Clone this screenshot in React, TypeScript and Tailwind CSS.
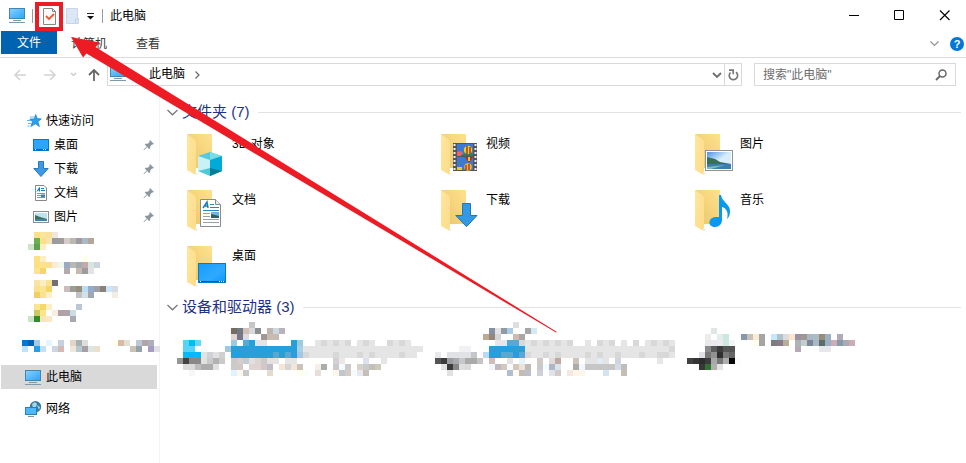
import React from "react";

type Run = [number, number, string];

/* Pixelated blocks: each run is [column, row, colours]; "-" skips a cell. */
function Mosaic({ w, h, runs, className }: { w: number; h: number; runs: Run[]; className?: string }) {
  return (
    <svg width={w} height={h} viewBox={`0 0 ${w} ${h}`} shapeRendering="crispEdges" className={`block shrink-0 ${className ?? ""}`}>
      {runs.flatMap(([c, r, s]) =>
        s.split(" ").map((k, i) =>
          k === "-" ? null : <rect key={`${c}-${r}-${i}`} x={(c + i) * 6} y={r * 6} width={6} height={6} fill={`#${k}`} />
        )
      )}
    </svg>
  );
}

const recent: Run[] = [
  [2, 0, "fbe08a fae59b f8e19b f1e6dc"],
  [2, 1, "69b04f fde088 f7e4b0 9a9ba1 a39b9b d5ccc9 b8b9b1 a09ba3 aab8c3 b3a79a"],
  [1, 2, "cfe3c8 5ea14e fcefc2"],
  [2, 4, "fbe084 fcefc3"],
  [10, 4, "fffee8"],
  [2, 5, "fbe084 fde38c fbe08f fdebd3 f0f8ee 98aac8 b8b9b1 a6abad c5a8ae d7e5df ccd4de"],
  [2, 6, "fce48f f5d56a - - - b3aaab - c6bab0 9c9c9e e3e3e3"],
  [2, 8, "f8e4a6 f8efc4 fae394 736f75"],
  [2, 9, "fbe18b fce592 f5d563 - fffef7 cbbcbe 9a9e97 979080 bcdcf4 94abca a09fa5 8b8177 c9e5ff d7dce0"],
  [2, 10, "efd063 fbe08d fcf0c6 fffef8 - - - c1c3c8 d4e2e5 9fa7b3 - - - f3ede6"],
  [2, 12, "fbe68f f5d86c fcefc6 - - - - bcc6d4"],
  [2, 13, "c9cb62 fde38c - f9eedb b0a1a6 ada3a9 cadde3"],
  [1, 14, "cbe3c6 358c22 f8e6b8 f8e9c4 - - - aaa8b0"],
  [0, 18, "0078d7 0063b5 a7c9e5 - e5f5ff - c5d1df - e1d5c8 a5b0b2 dddddd - - - - fffff2 d8b9a3 e0e0d3 - bcc6d4 b0a6aa aab1ba"],
  [0, 19, "c2e0f8 - 249fea c2e0f8 - ccd5e3 d7b9b3 - f1e6dc b5c9d1 a69fa5 dce6e2 eedecd - - - - - cdc2b6 96a2aa - a69bc0 e1e1e4"],
];

const driveOne: Run[] = [
  [12, 0, "c7c7c7"],
  [9, 1, "766c61 6f7b82 d5c0b8 d8d9dc 8a8f8f - bdb3af cbd8e2 b9b2b9"],
  [9, 2, "dfd6d5 7a7589 dcdce2 - - a09896 c7bcaf c7bcaf"],
  [1, 3, "57d3f8 00bcf2 67d5f7 - - - - - 9fc9df - 5ba9d2 269fdb e5e3e6 e5e3e6 - - - - 269fdb 9fc9df"],
  [23, 3, "e5e5e5 d8d8d8 e5e5e5 d8d8d8 e5e5e5 d8d8d8 - e5e5e5 d8d8d8 e5e5e5 - - d8d8d8 e5e5e5 d8d8d8 e5e5e5"],
  [1, 4, "57d3f8 57d3f8 - fafafa - - - 9fc9df 269fdb 269fdb 269fdb 269fdb 269fdb 269fdb 269fdb 269fdb 269fdb 269fdb 269fdb a7cfe5 e5e5e5 e5e5e5 e5e5e5 e5e5e5 e5e5e5 e5e5e5 e5e5e5 e5e5e5 e5e5e5 e5e5e5 e5e5e5 e5e5e5 e5e5e5 e5e5e5 e5e5e5 e5e5e5 e5e5e5 e5e5e5 e5e5e5 e5e5e5"],
  [1, 5, "00bcf2 00bcf2 00bcf2 e1e2e6 d0d1d4 e1e1e1 d0d0d0 - 269fdb 269fdb 269fdb 269fdb 269fdb 269fdb 269fdb 55a9d3 269fdb 55a9d3 269fdb 9fc9df d8d8d8 e5e5e5 e5e5e5 e5e5e5 e5e5e5 d8d8d8 e5e5e5 e5e5e5 e5e5e5 d8d8d8 e5e5e5 d8d8d8 e5e5e5 e5e5e5 e5e5e5 e5e5e5 d8d8d8 e5e5e5 e5e5e5"],
  [0, 6, "969696 434343 888888 898989 e1e1e1 cacaca b2b2b2 cacaca - cacaca d4cecd c4cbd4 e0e0e0 e0d4d2 cacaca e6e1df e3e3e3 - e5e5e5 e5e5e5 - - - - - - cfd1d7 eee5e5 - - - dce1ed - - e5e5e5"],
  [1, 7, "dadada dadada bdbdbd acacac acacac e1e1e1 - - cacaca d5c7c5 - e0d4d2 e0d4d2 d5c7c5 bdbec7 - f6e5d5 d5d5d5 f6e5d5 c9c4b8 - - f4efeb acacac - cacaca f4fcff cacaca - d8d1c9 cacaca c3bfba cdcab9"],
  [2, 8, "f7f7f7 - - - - - - dff3ff fff7ec c8c8c8 - - - e2dccc - - - - fffdeb f7fff8 - e7dfd7 - - fff6e9 bfc6d0 d4cbc4 f4fcff e7e8f1 c6bfb7"],
];

const driveTwo: Run[] = [
  [13, 0, "dedede"],
  [9, 1, "8590a3 e3e3e3 9199a3 aacae6 - - a6a6a6 d5e9f5"],
  [8, 2, "bfaa8f 94877a d5d5d3 - - ccbcaf a7a7a7"],
  [10, 3, "e7e7e9 e7e7e9 55a9d3 55a9d3 d8d8d8 e5e5e5 d8d8d8 e5e5e5 d8d8d8 e5e5e5 d8d8d8 e5e5e5 d8d8d8 - - e5e5e5 - d8d8d8 e5e5e5 d8d8d8 - e5e5e5 - d8d8d8 - e5e5e5 d8d8d8 e5e5e5 d8d8d8 e5e5e5"],
  [4, 4, "f0f1f3 f0f1f3 - - - 269fdb 269fdb 269fdb 269fdb 269fdb 269fdb e5e5e5 e5e5e5 e5e5e5 e5e5e5 e5e5e5 e5e5e5 e5e5e5 e5e5e5 e5e5e5 e5e5e5 e5e5e5 e5e5e5 e5e5e5 e5e5e5 e5e5e5 e5e5e5 e5e5e5 e5e5e5 e5e5e5 e5e5e5 e5e5e5 e5e5e5 e5e5e5 e5e5e5 d8d8d8"],
  [0, 5, "e7e9eb - e1e2e6 e1e2e6 e1e2e6 e1e2e6 c4c6c9 - b4ddf2 269fdb 269fdb 55a9d3 55a9d3 269fdb 55a9d3 d8d8d8 e5e5e5 e5e5e5 d8d8d8 e5e5e5 d8d8d8 e5e5e5 e5e5e5 e5e5e5 e5e5e5 d8d8d8 e5e5e5 d8d8d8 e5e5e5 e5e5e5 d8d8d8 e5e5e5 e5e5e5 e5e5e5 d8d8d8 e5e5e5 e5e5e5 d8d8d8 d8d8d8 e5e5e5"],
  [0, 6, "545454 3b3b3b 999d9e a8abad c5c8ca aaaaaa aaaaaa c5c5c5 - d0bdb9 - - e4e2e2 - e4f4fb - - d1c9c6 - dedbd8 bfa9a6 - - cec3b9 - e4e4e4 e4e4e4 dfedf3 e4e4e4 - d0d4e1 - - - - - - e7e7e7"],
  [1, 7, "e1e1e1 3b3b3b 878787 dedede dadada - - - f1f7ff c0b9be d3c7be f4fcff d3c7be ebe3db bfbab4 - cacaca f4fcff b1b6c4 d9e5ea - - abaaa8 f1f7ff c6c6c6 c6c6c6 c6c6c6 c6c6c6 c6c6c6 d6dce6 bebebe"],
  [2, 8, "e1e1e1 - - - - - - - - - aec0d0 fff9f0 c3bcb6 b9c0cc - ced0d7 - e0e3eb d4cbc8 - f3e8df fff6e9 fff6e9 - - - d5e2ef - - c6bdb5"],
];

const driveThree: Run[] = [
  [4, 0, "e1e5e6 - fefefe"],
  [3, 1, "ececec ffffff e4ecec cce7df - - 8798ad c7c1b8 faebd4 a6a3a9 - c7e7ff afc3c9 dcdcdc ffe4c9 9892aa a09791 a9b8c5 aebac6 958f7a 9bb0c5 - b1aab8"],
  [3, 2, "e8e8e8 f0e6f1 e9ebef cfe9e2 f2f4f5 - - - fffff0 a8a3a3 - 7d7d7d 887b8e b8ad96 - adb5b4 c2ced0 7b8797 a9b8c5 5d6b69 9bb0c5 cfabb3 8798ad a9abb3 cfabb3"],
  [3, 3, "8a8a8d 5c5c5d 3e3e3e 575757 545454 - - - - - - - - - - b5aab8 - - - e6e8ec e6e8ec"],
  [2, 4, "e1e2e8 777777 929292 303030 7a7a7a 676767"],
  [0, 5, "424242 353535 2d2d2d 3b3b3b a8a8a8 777777 adadad 080808 fcfcfc"],
  [2, 6, "383838 327132 afafaf e1e3e3"],
];

function Computer({ className = "" }: { className?: string }) {
  return (
    <svg width="17" height="16" viewBox="0 0 17 16" className={`shrink-0 ${className}`}>
      <defs><linearGradient id="screen" x2="1" y2="1"><stop stopColor="#8fd0fc" /><stop offset=".5" stopColor="#57bbff" /><stop offset="1" stopColor="#27a5fb" /></linearGradient></defs>
      <rect x=".5" y=".5" width="15" height="10" fill="url(#screen)" stroke="#4286ad" />
      <path d="M4 12.5h8M0 14.5h16" stroke="#7b9bad" />
    </svg>
  );
}

function DesktopIcon() {
  return <svg width="16" height="14" viewBox="0 0 16 14" className="shrink-0"><rect x=".5" y="1.5" width="15" height="11" fill="#29a6ff" stroke="#0879c6" /><path d="M1 11.5h14" stroke="#075f9d" /><path d="M2 11.5h1M10 11.5h4" stroke="#fff" strokeDasharray="1 1" /></svg>;
}
function DownloadIcon() {
  return <svg width="16" height="16" viewBox="0 0 16 16" className="shrink-0"><path d="M5.5.5h5v7h4.7L8 15.5.8 7.5h4.7z" fill="#3d98e6" stroke="#267ac2" /></svg>;
}
function DocumentIcon() {
  return <svg width="16" height="16" viewBox="0 0 16 16" className="shrink-0"><path d="M2.5.5h8.500l2.500 2.500v12.500h-11z" fill="#fff" stroke="#888" /><path d="M4 6.5 6.5 2.500v4M5 5h2M8 3.5h3M8 5.5h4" stroke="#1479b9" fill="none" /><path d="M4 8.5h8M4 10.5h4M4 12.5h8" stroke="#83939d" /><path d="M8 9.500h4V12H8z" fill="#3486ad" /></svg>;
}
function PictureIcon() {
  return <svg width="16" height="12" viewBox="0 0 16 12" className="shrink-0"><rect x=".5" y=".5" width="15" height="11" fill="#fff" stroke="#8e8e8e" /><path d="M2 2h12v8H2z" fill="#b8e4f4" /><path d="m2 4 5 2 7 2v1H2z" fill="#39715a" /><path d="M2 8h12v2H2z" fill="#3585af" /></svg>;
}
function StarIcon() {
  return <svg width="15" height="14" viewBox="0 0 15 14" className="shrink-0"><path d="m8.7.5 1.4 4.1 4.2.3-3.4 2.6 1.5 5-4-2.7-4.6 2.7 1.7-4.7L2.8 5h4.4z" fill="#28a1ee" stroke="#137dc7" strokeWidth=".7" /><path d="M3 3h4M0 6.5h4M1 9.5h3M.5 12h2" stroke="#61b9ef" /></svg>;
}
function Pin() {
  return <svg width="12" height="12" viewBox="0 0 12 12" className="shrink-0"><path d="m7 1 4 4-1.2.6-.8-.2-1.8 2L7 9.5l-1 .5-1.8-2L1 11.3l-.5-.5L3.7 7.4 1.8 5.6l.6-.8 2.3-.1 1.9-1.8-.2-1z" fill="#8a979f" /></svg>;
}

function FolderIcon({ kind }: { kind: string }) {
  return (
    <svg width="40" height="44" viewBox="0 0 40 44" className="block shrink-0">
      <defs>
        <linearGradient id="folder-back" x1="1" x2="0" y2="1"><stop stopColor="#ffe18d" /><stop offset="1" stopColor="#e9c568" /></linearGradient>
        <linearGradient id="folder-front" y2="1"><stop stopColor="#ffe6a0" /><stop offset="1" stopColor="#fbdc87" /></linearGradient>
        <linearGradient id="blue" x2="1" y2="1"><stop stopColor="#139cff" /><stop offset=".6" stopColor="#30a9ff" /><stop offset="1" stopColor="#069afd" /></linearGradient>
        <linearGradient id="sky" y2="1"><stop stopColor="#4d91e8" /><stop offset=".5" stopColor="#d7edf9" /></linearGradient>
      </defs>
      <path d="M8 39h3l-1 1.500H8z" fill="#e8e8e8" />
      <path d="M0 0h25v34H8L0 3z" fill="url(#folder-back)" />
      <path d="M0 0l8 6 1 3v28l-1 3.500L0 36z" fill="url(#folder-front)" />
      {kind === "3D 对象" && <g><path d="m11 22 12-4 12 4-12 5z" fill="#55c9df" /><path d="m23 18 12 4-12 5z" fill="#7bdce6" /><path d="m11 22 12 4v15l-12-4z" fill="#c9f2f6" /><path d="m23 26 12-4v15l-12 5z" fill="#00aad7" /><path d="M23 34l12 3-12 5z" fill="#087c93" /><path d="m11 37 12-3v8z" fill="#4bcbd8" /></g>}
      {kind === "文档" && <g><path d="M13.5 9.5h15l5 5v22h-20z" fill="#fff" stroke="#858d92" /><path d="M28.5 9.5v5h5" fill="#e7ebed" stroke="#858d92" /><path d="m16 18 4-6 1 6M18 16h3" stroke="#177ebd" strokeWidth="1.5" fill="none" /><path d="M23 14.5h4M23 17.5h9M16 20.5h16" stroke="#2889bf" /><path d="M16 23.5h7M16 26.5h7M16 29.5h16M16 32.5h16" stroke="#98a0a5" /><path d="M24 22h8v6h-8z" fill="#75b2dc" /><path d="m24 24 8 2v2h-8z" fill="#315c69" /></g>}
      {kind === "桌面" && <g><rect x="11.5" y="17.5" width="27" height="19" fill="url(#blue)" stroke="#087abf" /><path d="M12 35.5h26" stroke="#085b96" /><path d="M13 35.5h2M32 35.5h5" stroke="#fff" strokeDasharray="1 1" /></g>}
      {kind === "视频" && <g><path d="M12 9h24v28H12z" fill="#555" /><path d="M13.5 10v27M34.5 10v27" stroke="#f2f2f2" strokeWidth="2" strokeDasharray="2 2" /><path d="M16 10h16v12H16zM16 23h16v13H16z" fill="#3c78d4" /><path d="m16 18 4-1 4 5h-8z" fill="#ec6269" /><path d="m20 21 5-2 7 1v2H20z" fill="#1c8364" /><circle cx="27" cy="16" r="4.2" fill="#f1cb20" /><path d="M26 12v9M29 13v7" stroke="#a83b23" strokeWidth="1.5" /><path d="M24 23h8l-4 6z" fill="#b62b30" /><path d="M27 23h2v4h-2z" fill="#edc71f" /><circle cx="27" cy="33" r="3.8" fill="#e9bc24" /><path d="M25 31v5M28 30v6" stroke="#ba392d" strokeWidth="1.5" /><path d="M16 33h5v3h-5z" fill="#e5cf24" /></g>}
      {kind === "下载" && <path d="M21.5 13.5h8v12h6.500L25.500 36.700 14.800 25.5h6.7z" fill="#3399e5" stroke="#2178b8" />}
      {kind === "图片" && <g><rect x="10.5" y="16.5" width="27" height="20" fill="#fff" stroke="#929292" /><path d="M12 18h24v17H12z" fill="url(#sky)" /><path d="m12 23 8 2 5 3 11 2v2H12z" fill="#38705c" /><path d="M12 30h24v5H12z" fill="#3a7fab" /><path d="m12 33 18-2-14 4h-4z" fill="#80bac4" /></g>}
      {kind === "音乐" && <path d="M24 5h2c1 7 9 9 9 16 0 4-1 6-3 8 2-7-1-11-5-12v13c0 4-3 7-7 7-8 0-7-10 1-10h3z" fill="#079aef" />}
    </svg>
  );
}

function GroupHeading({ text }: { text: string }) {
  return (
    <div className="flex h-5 items-center text-[15px] leading-5 text-[#1e3287]">
      <svg width="11" height="7" viewBox="0 0 11 7" className="mr-1 shrink-0"><path d="m.5 1 5 4.8 5-4.8" fill="none" stroke="#777" strokeWidth="1.2" /></svg>
      <span className="whitespace-nowrap">{text}</span>
      <span className="ml-2 h-px flex-1 bg-[#e2e2e2]" />
    </div>
  );
}

const quick = [
  { name: "桌面", icon: <DesktopIcon /> },
  { name: "下载", icon: <DownloadIcon /> },
  { name: "文档", icon: <DocumentIcon /> },
  { name: "图片", icon: <PictureIcon /> },
];
const folders = ["3D 对象", "视频", "图片", "文档", "下载", "音乐", "桌面"];

export default function App() {
  return (
    <div className="relative flex h-[463px] w-[966px] flex-col overflow-hidden bg-white font-['Liberation_Sans','Noto_Sans_CJK_SC',sans-serif] text-xs text-black">
      <header className="flex h-[31px] shrink-0 items-center pl-[9px]">
        <Computer />
        <span className="ml-[6px] h-3.5 w-px bg-[#999]" />
        <span className="mt-px ml-[2px] flex h-[29px] w-7 items-center justify-center border-4 border-[#ed1c24] pl-px">
          <svg width="13" height="17" viewBox="0 0 13 17" className="shrink-0"><path d="M.5.5h9l3 3v13H.5z" fill="#fafafa" stroke="#858585" /><path d="M9.5.5v3h3" fill="none" stroke="#858585" /><path d="m3 8 3 3 5-5" fill="none" stroke="#ef572c" strokeWidth="1.8" /></svg>
        </span>
        <svg width="14" height="16" viewBox="0 0 14 16" className="ml-[3px]"><path d="M.5.5h11v10h1v5H.5z" fill="#dce7f5" stroke="#c8d5e8" /><path d="M9.5 15V11h3" fill="none" stroke="#c0cee1" /></svg>
        <svg width="7" height="7" viewBox="0 0 7 7" className="mt-0.5 ml-[7px]"><path d="M0 .5h7" stroke="#222" /><path d="M0 3h7L3.5 6.5z" fill="#111" /></svg>
        <span className="ml-2 h-3.5 w-px bg-[#999]" />
        <span className="ml-[7px]">此电脑</span>
        <svg width="103" height="12" viewBox="0 0 103 12" className="mr-[15px] ml-auto" fill="none" stroke="#000"><path d="M1 5.500h10" /><path d="M46.500.500h9v9h-9z" /><path d="m92 .500 9.500 9.500m0-9.500L92 10" strokeWidth="1.1" /></svg>
      </header>

      <nav className="flex h-[27px] shrink-0 items-start border-b border-[#dadbdc] pl-px">
        <span className="flex h-[23px] w-14 items-center justify-center bg-[#0063b1] pt-px text-white">文件</span>
        <span className="ml-3.5 flex h-[25px] items-center text-[#333]">计算机</span>
        <span className="ml-[29px] flex h-[25px] items-center text-[#333]">查看</span>
        <svg width="9" height="6" viewBox="0 0 9 6" className="mt-[10px] mr-[11px] ml-auto"><path d="m.5.5 4 4 4-4" fill="none" stroke="#929292" strokeWidth="1.2" /></svg>
        <span className="mt-1.5 mr-[2px] flex size-[14px] items-center justify-center rounded-full bg-[#0078d7] text-[11px] leading-none font-bold text-white">?</span>
      </nav>

      <div className="flex h-[39px] shrink-0 items-start pt-[5px]">
        <svg width="107" height="23" viewBox="0 0 107 23" className="shrink-0" fill="none"><path d="M26 12H15m5-5-5 5 5 5M44 12h11m-5-5 5 5-5 5" stroke="#d3d3d3" strokeWidth="1.5" /><path d="m71 10 2.500 2.500L76 10" stroke="#c8c8c8" strokeWidth="1.200" /><path d="M94 18V7m-5 5 5-5 5 5" stroke="#666" strokeWidth="1.800" /></svg>
        <div className="flex h-[23px] w-[635px] items-center border border-[#d9d9d9] pl-[2px]">
          <Computer className="mb-px" />
          <span className="mb-px ml-[22px]">此电脑</span>
          <svg width="5" height="8" viewBox="0 0 5 8" className="ml-[10px]"><path d="m.5.5 3.500 3.500-3.500 3.500" fill="none" stroke="#666" strokeWidth="1.200" /></svg>
          <svg width="10" height="7" viewBox="0 0 10 7" className="mt-px mr-[2px] ml-auto"><path d="m1 1 4 4 4-4" fill="none" stroke="#707070" strokeWidth="1.900" /></svg>
          <span className="flex h-full w-[17px] items-center justify-center border-l border-[#d9d9d9]">
            <svg width="11" height="12" viewBox="0 0 11 12" fill="none" stroke="#777" strokeWidth="1.700"><path d="M8 3.200A4.200 4.200 0 1 1 2.500 3.500M1 1.200h4.200v4" /></svg>
          </span>
        </div>
        <div className="ml-3 flex h-[23px] w-[202px] items-center border border-[#d9d9d9] px-[8px] text-[#6d6d6d]">
          <span>搜索"此电脑"</span>
          <svg width="12" height="12" viewBox="0 0 12 12" className="ml-auto" fill="none" stroke="#666"><circle cx="7.500" cy="4.500" r="3.500" strokeWidth="1.500" /><path d="m5 7-4 4" strokeWidth="1.800" /></svg>
        </div>
      </div>

      <div className="flex min-h-0 flex-1">
        <aside className="w-[160px] shrink-0 border-r border-[#f3f3f3] pt-3">
          <div className="flex h-6 items-center pl-[27px]"><StarIcon /><span className="ml-1">快速访问</span></div>
          {quick.map((q) => (
            <div key={q.name} className="flex h-6 items-center pr-1 pl-[33px]">
              {q.icon}<span className="ml-[5px]">{q.name}</span><span className="ml-auto"><Pin /></span>
            </div>
          ))}
          <Mosaic w={138} h={120} runs={recent} className="mt-[3px] ml-[22px]" />
          <div className="mt-[13px] ml-px flex h-6 w-[156px] items-center bg-[#d9d9d9] pl-6"><Computer className="mt-px" /><span className="ml-1">此电脑</span></div>
          <div className="mt-2 flex h-6 items-center pl-[25px]">
            <svg width="17" height="16" viewBox="0 0 17 16"><circle cx="10.500" cy="5.700" r="5.700" fill="#397b9c" /><path d="m7 3 3-2 2 2-1 3-3 1zM12 4l3 2-1 3z" fill="#a6d7e8" /><rect x=".5" y="6.500" width="11" height="7" fill="#4db8fa" stroke="#2582b8" /><path d="M3 15.500h6" stroke="#82939c" /></svg>
            <span className="ml-1">网络</span>
          </div>
        </aside>

        <main className="min-w-0 flex-1 pt-[5px] pr-[5px] pl-[7px]">
          <GroupHeading text="文件夹 (7)" />
          <div className="mt-3 grid grid-cols-[repeat(3,254px)] pl-5">
            {folders.map((f) => (
              <div key={f} className="flex h-14 items-start"><FolderIcon kind={f} /><span className="mt-px ml-[5px] leading-[18px]">{f}</span></div>
            ))}
          </div>
          <div className="-mt-[5px]"><GroupHeading text="设备和驱动器 (3)" /></div>
          <div className="mt-[5px] flex items-start pl-[10px]">
            <Mosaic w={258} h={54} runs={driveOne} />
            <Mosaic w={252} h={54} runs={driveTwo} />
            <Mosaic w={168} h={42} runs={driveThree} className="mt-1.5" />
          </div>
        </main>
      </div>

      <svg width="966" height="463" viewBox="0 0 966 463" className="pointer-events-none absolute inset-0">
        <path d="M71 37 99.500 42.500 95.500 47 557 332 556 332.500 86.500 53.500 83 57.500z" fill="#ed1c24" />
      </svg>
    </div>
  );
}
